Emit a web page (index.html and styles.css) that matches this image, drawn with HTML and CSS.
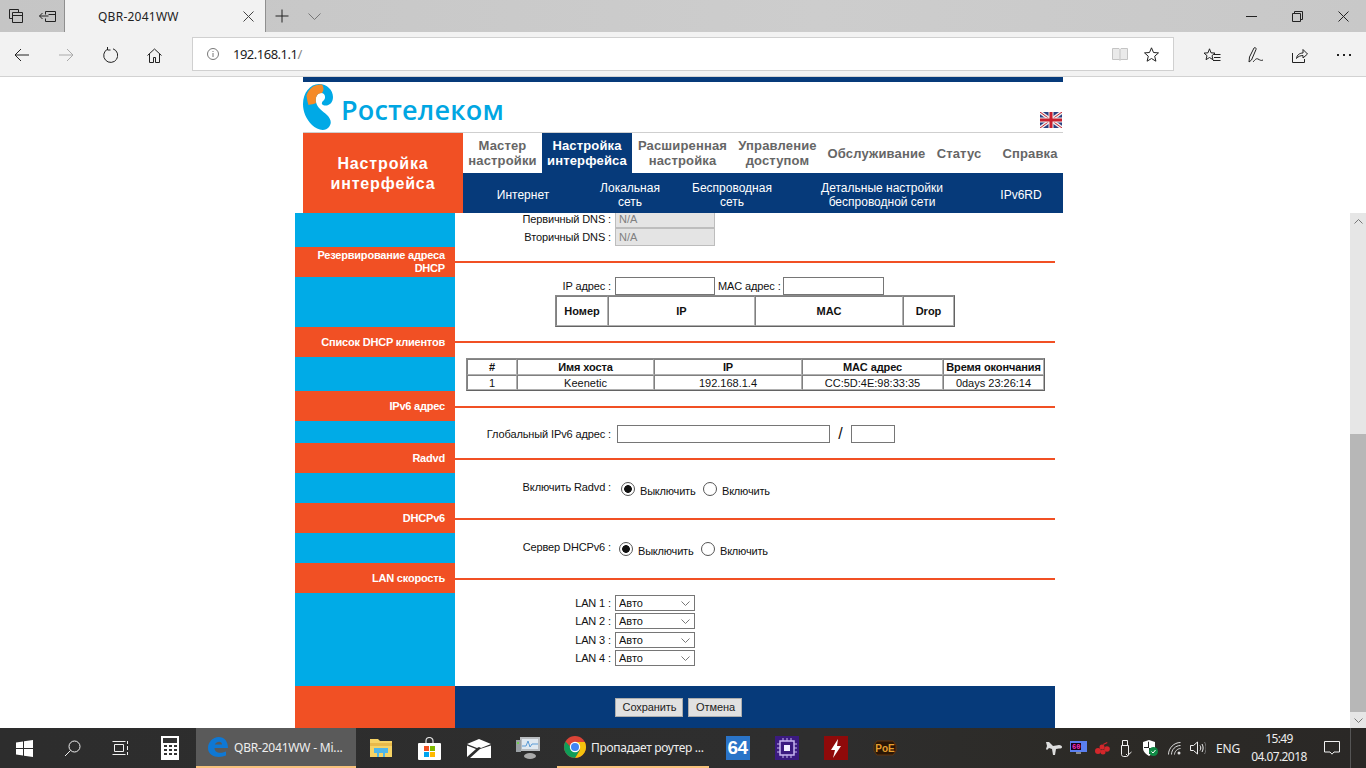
FILE: index.html
```html
<!DOCTYPE html>
<html lang="ru">
<head>
<meta charset="utf-8">
<title>QBR-2041WW</title>
<link rel="stylesheet" href="styles.css">
</head>
<body>
<div class="browser">
  <div class="tabbar">
    <div class="tb-btn"><svg width="16" height="16" viewBox="0 0 16 16" class="ic"><path d="M1.5 1.5h9v3M1.5 1.5v9h3M4.5 4.5h10v10h-10zM4.5 7.5h10"/></svg></div>
    <div class="tb-btn"><svg width="18" height="14" viewBox="0 0 18 14" class="ic"><path d="M6.5 2.5h10v10h-10v-3M6.5 5.5v-3M9.5 5.5h7M0.5 7h9M3.5 4L0.5 7l3 3"/></svg></div>
    <div class="tab">
      <span class="tab-title">QBR-2041WW</span>
      <svg width="11" height="11" viewBox="0 0 11 11" class="ic tab-x"><path d="M.5.5l10 10M10.5.5l-10 10"/></svg>
    </div>
    <div class="tb-btn"><svg width="14" height="14" viewBox="0 0 14 14" class="ic"><path d="M7 .5v13M.5 7h13"/></svg></div>
    <div class="tb-btn"><svg width="13" height="7" viewBox="0 0 13 7" class="ic grey"><path d="M.5.5l6 6 6-6"/></svg></div>
    <div class="win-ctrls">
      <div class="win-btn"><svg width="11" height="1" viewBox="0 0 11 1" class="ic"><path d="M0 .5h11"/></svg></div>
      <div class="win-btn"><svg width="11" height="11" viewBox="0 0 11 11" class="ic"><path d="M.5 2.5h8v8h-8zM2.5 2.5v-2h8v8h-2"/></svg></div>
      <div class="win-btn"><svg width="11" height="11" viewBox="0 0 11 11" class="ic"><path d="M.5.5l10 10M10.5.5l-10 10"/></svg></div>
    </div>
  </div>
  <div class="toolbar">
    <div class="nav-btn"><svg width="16" height="14" viewBox="0 0 16 14" class="ic"><path d="M15 7H1M7 1L1 7l6 6"/></svg></div>
    <div class="nav-btn"><svg width="16" height="14" viewBox="0 0 16 14" class="ic faint"><path d="M1 7h14M9 1l6 6-6 6"/></svg></div>
    <div class="nav-btn"><svg width="16" height="16" viewBox="0 0 16 16" class="ic"><path d="M5.5 2.2A7 7 0 1 0 11 1.8M5.5 0v3h3"/></svg></div>
    <div class="nav-btn"><svg width="15" height="15" viewBox="0 0 15 15" class="ic"><path d="M.5 7.5l7-6.5 7 6.5M2.5 6v8.500h4v-5h2v5h4V6"/></svg></div>
    <div class="address">
      <svg width="12" height="12" viewBox="0 0 12 12" class="ic grey info"><circle cx="6" cy="6" r="5.500"/><path d="M6 5v4M6 3v1"/></svg>
      <span class="url">192.168.1.1<span class="url-dim">/</span></span>
      <svg width="16" height="14" viewBox="0 0 16 14" class="ic pale book"><path d="M.5 1.500h6.500l1 1 1-1h6.500v11h-6.500l-1 .8-1-.8H.5zM8 2.500v10.500" fill="#eaeaea"/></svg>
      <svg width="15" height="15" viewBox="0 0 15 15" class="ic star"><path d="M7.500.8l2 4.700 5 .4-3.800 3.300 1.200 5-4.400-2.700-4.400 2.700 1.200-5L.5 5.900l5-.4z"/></svg>
    </div>
    <div class="nav-btn first-right"><svg width="17" height="15" viewBox="0 0 17 15" class="ic"><path d="M5.500.8l1.500 4 4 .3-3 2.600 1 4-3.500-2.200L2 11.700l1-4-3-2.600 4-.3zM10 6.500h6.500M10 9.500h6.500M9 12.500h7.500"/></svg></div>
    <div class="nav-btn"><svg width="16" height="16" viewBox="0 0 16 16" class="ic"><path d="M1 15l.5-5L6 1c1-1 2.500 0 2 1.500L3.500 13 1 15zM5 15c2-2 3-4 5-3s3 2 5 1"/></svg></div>
    <div class="nav-btn"><svg width="16" height="15" viewBox="0 0 16 15" class="ic"><path d="M.5 5v9.500h12V11M4.500 10.500C5 6.500 8 5 11 5V1.500L15.500 6 11 10V7.500c-2.500 0-5 1-6.500 3z"/></svg></div>
    <div class="nav-btn"><span class="dots"><i></i><i></i><i></i></span></div>
  </div>

  <div class="viewport">
    <header class="top-frame">
      <div class="top-page">
        <div class="top-bar"></div>
        <div class="brand">
          <svg class="logo" width="30" height="46" viewBox="0 0 30 46">
            <path fill="#00a9e6" d="M16 0C24 0 30 6 30 13C30 20 24 23 20 21C18 20 19 18 20 17C23 15 23 9 18 9C14 9 12 14 13 18C14 24 20 27 24 31C28 35 29 39 26 43C22 48 14 46 9 41C3 35 0 28 0 20C0 9 7 0 16 0Z"/>
            <path fill="#f58a28" d="M19 .6C12 0 6 4 3.500 11.500C4 15 4.500 18 5.500 21C8 20.500 11 20 13 19C12 13 14 9 19 9C21 7 21 3 19 .6Z"/>
          </svg>
          <span class="brand-name">Ростелеком</span>
          <svg class="flag" width="22" height="16" viewBox="0 0 22 16">
            <rect width="22" height="16" fill="#2a3f80"/>
            <path d="M0 0l22 16M22 0L0 16" stroke="#eee" stroke-width="3.500"/>
            <path d="M0 0l22 16M22 0L0 16" stroke="#c8202f" stroke-width="1"/>
            <path d="M11 0v16M0 8h22" stroke="#eee" stroke-width="5"/>
            <path d="M11 0v16M0 8h22" stroke="#c8202f" stroke-width="3"/>
          </svg>
        </div>
        <div class="menu-wrap">
          <div class="section-title">Настройка<br>интерфейса</div>
          <div class="menus">
            <nav class="menu-main">
              <a class="m1">Мастер<br>настройки</a>
              <a class="m2 active">Настройка<br>интерфейса</a>
              <a class="m3">Расширенная<br>настройка</a>
              <a class="m4">Управление<br>доступом</a>
              <a class="m5">Обслуживание</a>
              <a class="m6">Статус</a>
              <a class="m7">Справка</a>
            </nav>
            <nav class="menu-sub">
              <a class="s1">Интернет</a>
              <a class="s2">Локальная<br>сеть</a>
              <a class="s3">Беспроводная<br>сеть</a>
              <a class="s4">Детальные настройки<br>беспроводной сети</a>
              <a class="s5">IPv6RD</a>
            </nav>
          </div>
        </div>
      </div>
    </header>

    <div class="content-frame">
      <div class="scroll-area">
        <main class="page">
          <section class="row h34 dns">
            <div class="side"></div>
            <div class="body">
              <div class="field dns-field"><span class="lbl">Первичный DNS :</span><input class="ro" value="N/A" disabled></div>
              <div class="field dns-field"><span class="lbl">Вторичный DNS :</span><input class="ro" value="N/A" disabled></div>
            </div>
          </section>
          <section class="row title"><div class="side"><span class="two-line">Резервирование адреса DHCP</span></div><div class="body"><hr class="rule r14"></div></section>
          <section class="row h50">
            <div class="side"></div>
            <div class="body">
              <div class="field ip-field">
                <span class="lbl">IP адрес :</span><input class="txt w100">
                <span class="lbl-mac">MAC адрес :</span><input class="txt w101">
              </div>
              <table class="grid t-res">
                <tr><th>Номер</th><th>IP</th><th>MAC</th><th>Drop</th></tr>
              </table>
            </div>
          </section>
          <section class="row title"><div class="side"><span>Список DHCP клиентов</span></div><div class="body"><hr class="rule r14"></div></section>
          <section class="row h34">
            <div class="side"></div>
            <div class="body">
              <table class="grid t-cli">
                <tr class="hd"><th>#</th><th>Имя хоста</th><th>IP</th><th>MAC адрес</th><th>Время окончания</th></tr>
                <tr><td>1</td><td>Keenetic</td><td>192.168.1.4</td><td>CC:5D:4E:98:33:35</td><td>0days 23:26:14</td></tr>
              </table>
            </div>
          </section>
          <section class="row title"><div class="side"><span>IPv6 адрес</span></div><div class="body"><hr class="rule r15"></div></section>
          <section class="row h22">
            <div class="side"></div>
            <div class="body">
              <div class="field v6-field"><span class="lbl">Глобальный IPv6 адрес :</span><input class="txt w213"><span class="slash">/</span><input class="txt w44"></div>
            </div>
          </section>
          <section class="row title"><div class="side"><span>Radvd</span></div><div class="body"><hr class="rule r15"></div></section>
          <section class="row h30">
            <div class="side"></div>
            <div class="body">
              <div class="field opt-field radvd">
                <span class="lbl">Включить Radvd :</span>
                <input class="radio" type="radio" name="radvd" checked><span class="choice c1">Выключить</span>
                <input class="radio" type="radio" name="radvd"><span class="choice">Включить</span>
              </div>
            </div>
          </section>
          <section class="row title"><div class="side"><span>DHCPv6</span></div><div class="body"><hr class="rule r15"></div></section>
          <section class="row h30">
            <div class="side"></div>
            <div class="body">
              <div class="field opt-field dhcp6">
                <span class="lbl">Сервер DHCPv6 :</span>
                <input class="radio" type="radio" name="d6" checked><span class="choice c1">Выключить</span>
                <input class="radio" type="radio" name="d6"><span class="choice">Включить</span>
              </div>
            </div>
          </section>
          <section class="row title"><div class="side"><span>LAN скорость</span></div><div class="body"><hr class="rule r15"></div></section>
          <section class="row h93">
            <div class="side"></div>
            <div class="body lan">
              <div class="field lan-field"><span class="lbl">LAN 1 :</span><select class="sel"><option>Авто</option></select></div>
              <div class="field lan-field"><span class="lbl">LAN 2 :</span><select class="sel"><option>Авто</option></select></div>
              <div class="field lan-field"><span class="lbl">LAN 3 :</span><select class="sel"><option>Авто</option></select></div>
              <div class="field lan-field"><span class="lbl">LAN 4 :</span><select class="sel"><option>Авто</option></select></div>
            </div>
          </section>
          <section class="row foot">
            <div class="foot-side"></div>
            <div class="foot-body"><button class="btn b-save">Сохранить</button><button class="btn b-cancel">Отмена</button></div>
          </section>
        </main>
      </div>
      <div class="scrollbar">
        <div class="sb-arrow"><svg width="9" height="5" viewBox="0 0 9 5" class="ic grey"><path d="M.5 4.500l4-4 4 4"/></svg></div>
        <div class="sb-track"></div>
        <div class="sb-thumb"></div>
        <div class="sb-arrow"><svg width="9" height="5" viewBox="0 0 9 5" class="ic grey"><path d="M.5.500l4 4 4-4"/></svg></div>
      </div>
    </div>
  </div>

  <footer class="taskbar">
    <div class="tk"><svg width="17" height="17" viewBox="0 0 17 17"><path fill="#fff" d="M0 2.400l7-1v6.600H0zM8 1.300L17 0v8H8zM0 9h7v6.600l-7-1zM8 9h9v8l-9-1.300z"/></svg></div>
    <div class="tk"><svg width="17" height="17" viewBox="0 0 17 17" class="ic white"><circle cx="10.500" cy="6.500" r="5.500"/><path d="M6.500 10.500L1 16"/></svg></div>
    <div class="tk"><svg width="17" height="16" viewBox="0 0 17 16" class="ic white"><path d="M2.500 4.500h9v7h-9zM.5 1.500h13M.5 14.500h13M15.500 1v3M15.500 6v4M15.500 12v3"/></svg></div>
    <div class="tk tk-calc"><svg width="18" height="24" viewBox="0 0 18 24"><rect width="18" height="24" fill="#fff"/><rect x="2" y="2" width="14" height="5" fill="#333"/><g fill="#333"><rect x="3" y="9" width="3" height="2"/><rect x="8" y="9" width="3" height="2"/><rect x="13" y="9" width="3" height="2"/><rect x="3" y="13" width="3" height="2"/><rect x="8" y="13" width="3" height="2"/><rect x="13" y="13" width="3" height="2"/><rect x="3" y="17" width="3" height="2"/><rect x="8" y="17" width="3" height="2"/><rect x="13" y="17" width="3" height="2"/></g></svg></div>
    <div class="tk-app current">
      <svg width="20" height="20" viewBox="0 0 20 20"><path fill="#0f78d4" d="M10.500 0C16.500 0 20 4.500 20 11H6.500C6.500 15 11 17.500 18 14.500V18.500C11 21.500 0 20 0 11C0 5 5 0 10.500 0ZM6.800 7.500H14C14 4 9 3.500 6.800 7.500Z"/></svg>
      <span>QBR-2041WW - Mi...</span>
    </div>
    <div class="tk"><svg width="22" height="20" viewBox="0 0 22 20"><path fill="#f6d365" d="M0 1h8l2 2h12v16H0z"/><path fill="#e8b94a" d="M0 5h22v3H0z"/><path fill="#4fb6e8" d="M4 10h14v5h-3v4H7v-4H4z"/><rect x="9" y="15" width="4" height="4" fill="#f6d365"/></svg></div>
    <div class="tk"><svg width="23" height="23" viewBox="0 0 23 23"><path fill="none" stroke="#ddd" stroke-width="1.200" d="M8 7V4a3.500 3.500 0 0 1 7 0v3"/><rect y="6" width="23" height="17" rx="1" fill="#fff"/><rect x="6" y="9" width="5" height="5" fill="#f25022"/><rect x="12" y="9" width="5" height="5" fill="#7fba00"/><rect x="6" y="15" width="5" height="5" fill="#00a4ef"/><rect x="12" y="15" width="5" height="5" fill="#ffb900"/></svg></div>
    <div class="tk"><svg width="24" height="19" viewBox="0 0 24 19"><path fill="#fff" d="M0 5L12 0l12 5L14 9 12 8l-2 1zM0 6.500l9 3.500-9 8zM24 6.500V19H3l10-9z"/></svg></div>
    <div class="tk"><svg width="24" height="22" viewBox="0 0 24 22"><rect x="4" y="0" width="20" height="14" fill="#b8bcc0"/><rect x="6" y="2" width="16" height="10" fill="#dfe8f0"/><path fill="none" stroke="#5b9bd5" d="M6 9h4l2-5 2 6 2-3h6"/><rect x="0" y="3" width="5" height="12" fill="#9aa0a4"/><rect x="1" y="5" width="2" height="2" fill="#6fcf4f"/><ellipse cx="14" cy="19" rx="6" ry="3" fill="#aaa"/></svg></div>
    <div class="tk-app chrome">
      <svg width="22" height="22" viewBox="0 0 22 22"><circle cx="11" cy="11" r="11" fill="#db4437"/><path fill="#f4c20d" d="M11 6h9.800A11 11 0 0 1 11 22l5-8z"/><path fill="#0f9d58" d="M1.500 5.500A11 11 0 0 0 11 22l5-8.500-5 2z"/><circle cx="11" cy="11" r="5.200" fill="#fff"/><circle cx="11" cy="11" r="4" fill="#4285f4"/></svg>
      <span>Пропадает роутер ...</span>
    </div>
    <div class="tk"><div class="tile t64">64</div></div>
    <div class="tk"><svg width="24" height="24" viewBox="0 0 24 24"><rect width="24" height="24" fill="#3b1a80"/><rect x="5" y="5" width="14" height="14" fill="none" stroke="#c8b6f0" stroke-width="1.500"/><rect x="9" y="9" width="6" height="6" fill="#f2efff"/><path stroke="#c8b6f0" d="M8 2v3M12 2v3M16 2v3M8 19v3M12 19v3M16 19v3M2 8h3M2 12h3M2 16h3M19 8h3M19 12h3M19 16h3"/></svg></div>
    <div class="tk"><svg width="24" height="24" viewBox="0 0 24 24"><rect width="24" height="24" fill="#8f0a0a"/><path fill="#fff" d="M14 3L7 14h4l-2 8 8-12h-4z"/></svg></div>
    <div class="tk"><svg width="24" height="16" viewBox="0 0 24 16"><path d="M4 1h16l3 4v6l-3 4H4l-3-4V5z" fill="#2a1606" stroke="#5e3510"/><text x="12" y="12" class="poe">PoE</text></svg></div>
    <div class="tray">
      <div class="tr"><svg width="16" height="14" viewBox="0 0 16 14"><path fill="#ddd" d="M0 1l3 0 4 4 6-1c2 0 3 1 3 2s-1 1.500-3 1.500L10 8l-1 6H7L6 8 3 7 1 9 0 8l1-3z"/></svg></div>
      <div class="tr"><svg width="17" height="14" viewBox="0 0 17 14"><rect width="17" height="11" fill="#5a7ff0"/><rect x="1" y="2" width="10" height="7" fill="#180018"/><text x="2" y="8" class="fps">60</text><rect x="6" y="11" width="5" height="2" fill="#888"/></svg></div>
      <div class="tr"><svg width="15" height="13" viewBox="0 0 15 13" fill="#d3272b"><circle cx="3" cy="9" r="3"/><circle cx="8" cy="10" r="2.500"/><circle cx="12" cy="7" r="2.800"/><circle cx="7" cy="5" r="2.500"/><path d="M8 2l4-2 .5 1-4 2z"/></svg></div>
      <div class="tr"><svg width="12" height="17" viewBox="0 0 12 17" class="ic white"><path d="M1.500 5.500h7v9c0 1-1 2-2 2h-3c-1 0-2-1-2-2zM2.500 5.500v-5h5v5M6 14l1.500 1.500L11.500 12"/></svg></div>
      <div class="tr"><svg width="16" height="16" viewBox="0 0 16 16"><path fill="#fff" d="M7 0L1 2v6c0 4 3 6 6 8 3-2 6-4 6-8V2z"/><path fill="#222" d="M7 1.500V8H2V7h4V2zM7 8h5v1H8v5H7z"/><circle cx="11.500" cy="11.500" r="4.500" fill="#0f8a45"/><path d="M9.500 11.500l1.500 1.500 2.500-3" stroke="#fff" fill="none"/></svg></div>
      <div class="tr"><svg width="13" height="13" viewBox="0 0 13 13" class="ic lightgrey"><path d="M.5 12.500C.5 6 6 .5 12.500.5M3.500 12.500c0-5 4-9 9-9M6.500 12.500c0-3 3-6 6-6"/><circle cx="11" cy="11" r="1.500" fill="#ddd" stroke="none"/></svg></div>
      <div class="tr"><svg width="16" height="14" viewBox="0 0 16 14" class="ic white"><path d="M.5 4.500h3L7.500 1v12l-4-3.500h-3zM10 4.500c1 1.500 1 3.500 0 5M12 3c1.500 2.500 1.500 5.500 0 8"/><path d="M14.500 1c2 3.500 2 8.500 0 12" stroke="#777"/></svg></div>
      <div class="tr-lang">ENG</div>
      <div class="clock"><span>15:49</span><span>04.07.2018</span></div>
      <div class="notif"><svg width="16" height="14" viewBox="0 0 16 14" class="ic white"><path d="M.5.500h15v10.500h-5.500L8 13.200 6 11H.5z"/></svg></div>
      <div class="show-desk"></div>
    </div>
  </footer>
</div>
</body>
</html>
```
FILE: styles.css
```css
* { box-sizing: border-box; }
html, body { margin: 0; padding: 0; height: 100%; overflow: hidden; }
body { font-family: "Liberation Sans", Arial, sans-serif; font-size: 11px; color: #111; background: #fff; }
.browser { width: 1366px; height: 768px; display: flex; flex-direction: column; overflow: hidden; }

.ic { fill: none; stroke: #222; stroke-width: 1; display: block; flex: none; }
.ic.grey { stroke: #777; }
.ic.faint { stroke: #aaa; }
.ic.pale { stroke: #c4c4c4; }
.ic.white { stroke: #f0f0f0; }
.ic.lightgrey { stroke: #ddd; }

/* browser chrome */
.tabbar { height: 32px; display: flex; background: linear-gradient(90deg, #c5c5c5, #cdcdcd 60%, #c8c8c8); flex: none; }
.tb-btn { width: 32px; display: flex; align-items: center; justify-content: center; }
.tab { width: 202px; margin-left: 0; display: flex; align-items: center; background: #f2f2f2; border-left: 1px solid #8f8f8f; border-right: 1px solid #8f8f8f; font-family: "Noto Sans", sans-serif; font-size: 12px; letter-spacing: .25px; color: #222; }
.tab-title { padding-left: 33px; flex: 1; }
.tab-x { margin-right: 11px; stroke: #444; }
.win-ctrls { margin-left: auto; display: flex; }
.win-btn { width: 46px; display: flex; align-items: center; justify-content: center; }

.toolbar { height: 45px; flex: none; display: flex; align-items: center; background: #f2f2f2; border-bottom: 1px solid #d2d2d2; }
.nav-btn { width: 44px; height: 44px; padding-top: 2px; display: flex; align-items: center; justify-content: center; flex: none; }
.nav-btn.first-right { margin-left: 16px; }
.address { width: 982px; height: 34px; margin-left: 16px; background: #fff; border: 1px solid #d0d0d0; display: flex; align-items: center; flex: none; font-family: "Noto Sans", sans-serif; font-size: 13px; color: #222; }
.info { margin-left: 14px; }
.url { margin-left: 14px; flex: 1; letter-spacing: -.5px; }
.url-dim { color: #888; }
.book { margin-right: 16px; }
.star { margin-right: 14px; }
.dots { display: flex; gap: 4px; }
.dots i { width: 2px; height: 2px; background: #222; display: block; }

/* viewport */
.viewport { flex: 1; min-height: 0; display: flex; flex-direction: column; background: #fff; }
.top-frame { height: 136px; flex: none; }
.top-page { width: 760px; margin: 0 auto; }
.top-bar { height: 5px; background: #063a7a; }
.brand { height: 51px; border-bottom: 1px solid #cfcfcf; display: flex; align-items: flex-start; }
.logo { margin-top: 2px; flex: none; }
.brand-name { margin-left: 8px; margin-top: 10px; font-family: "Open Sans", sans-serif; font-weight: 600; font-size: 27px; line-height: 36px; letter-spacing: .2px; color: #00a6e2; flex: 1; }
.flag { margin: 30px 1px 0 0; flex: none; }
.menu-wrap { display: flex; height: 80px; }
.section-title { width: 160px; flex: none; padding-top: 2px; background: #f15024; color: #fff; font-weight: 700; font-size: 16px; line-height: 20px; letter-spacing: .85px; text-align: center; display: flex; align-items: center; justify-content: center; }
.menus { width: 600px; }
.menu-main { height: 40px; display: grid; grid-template-columns: 79px 90px 101px 89px 109px 56px 76px; }
.menu-main a { display: flex; align-items: center; justify-content: center; text-align: center; font-weight: 700; font-size: 13px; line-height: 15px; letter-spacing: .15px; color: #666; white-space: nowrap; }
.menu-main .active { background: #063a7a; color: #fff; }
.menu-main .m7 { padding-left: 10px; }
.menu-sub { height: 40px; padding-top: 3px; background: #063a7a; display: grid; grid-template-columns: 120px 94px 110px 190px 86px; }
.menu-sub a { display: flex; align-items: center; justify-content: center; text-align: center; font-size: 12px; line-height: 14px; color: #fff; }
.menu-sub .s5 { padding-left: 2px; }

.content-frame { flex: 1; min-height: 0; display: flex; }
.scroll-area { flex: 1; min-width: 0; overflow: hidden; }
.scrollbar { width: 16px; flex: none; display: flex; flex-direction: column; background: #e6e6e6; }
.sb-arrow { height: 16px; flex: none; display: flex; align-items: center; justify-content: center; }
.sb-track { height: 205px; flex: none; }
.sb-thumb { flex: 1; background: #b7b7b7; }

.page { width: 760px; margin: 0 auto; }
.row { display: flex; }
.side { width: 160px; flex: none; background: #00abe7; }
.body { flex: 1; min-width: 0; overflow: hidden; }
.h34 { height: 34px; }
.h50 { height: 50px; }
.h22 { height: 22px; }
.h30 { height: 30px; }
.h93 { height: 93px; }
.title { height: 30px; }
.title .side { background: #f15024; color: #fff; font-weight: 700; font-size: 11px; line-height: 13px; letter-spacing: -.2px; text-align: right; padding-right: 10px; display: flex; align-items: center; justify-content: flex-end; }
.rule { height: 2px; margin: 0; border: 0; background: #f15024; }
.r14 { margin-top: 14px; }
.r15 { margin-top: 15px; }

.field { display: flex; align-items: center; }
.lbl { width: 156px; flex: none; text-align: right; white-space: pre; letter-spacing: -.12px; }
input.ro { width: 100px; height: 18px; margin: 0 0 0 4px; padding: 0 3px; border: 1px solid #bdbdbd; background: #e4e4e4; color: #808080; font: 11px "Liberation Sans", sans-serif; }
.dns .body { margin-top: -3px; }
.dns-field { height: 18px; }
.txt { height: 18px; margin: 0; padding: 0 2px; border: 1px solid #767676; background: #fff; }
.w100 { width: 100px; margin-left: 4px; }
.w101 { width: 101px; margin-left: 2px; }
.w213 { width: 213px; margin-left: 6px; }
.w44 { width: 44px; }
.lbl-mac { margin-left: 3px; letter-spacing: -.12px; }
.ip-field { height: 18px; }
.v6-field { padding-top: 4px; height: 22px; }
.slash { width: 21px; text-align: center; font-size: 16px; line-height: 18px; }

table.grid { border-collapse: separate; border-spacing: 0; table-layout: fixed; border: 1px solid; border-color: #8a8a8a #636363 #636363 #8a8a8a; }
.grid th, .grid td { padding: 0; text-align: center; border: 1px solid; border-color: #808080 #b0b0b0 #b0b0b0 #808080; font-size: 11px; line-height: 13px; color: #111; }
.grid th { font-weight: 700; }
.t-res { margin-left: 100px; width: 400px; height: 32px; }
.t-res th:nth-child(1) { width: 52px; }
.t-res th:nth-child(2) { width: 147px; }
.t-res th:nth-child(3) { width: 148px; }
.t-cli { margin: 1px 0 0 11px; width: 579px; height: 33px; }
.t-cli th:nth-child(1) { width: 50px; }
.t-cli th:nth-child(2) { width: 137px; }
.t-cli th:nth-child(3) { width: 148px; }
.t-cli th:nth-child(4) { width: 141px; }
.t-cli th, .t-cli td { line-height: 12px; }
.t-cli th { white-space: nowrap; letter-spacing: -.1px; }
.t-cli .hd { height: 16px; }

.opt-field { align-items: flex-start; height: 30px; }
.opt-field .lbl { padding-top: 8px; }
.radvd { padding-top: 0; }
.radio { appearance: none; -webkit-appearance: none; width: 14px; height: 14px; margin: 9px 0 0 0; border: 1px solid #555; border-radius: 50%; background: #fff; flex: none; }
.radio:checked { background: radial-gradient(circle, #111 0 3.500px, #fff 4.200px); }
.radvd .radio:first-of-type { margin-left: 10px; }
.dhcp6 .radio:first-of-type { margin-left: 8px; }
.choice { padding-top: 12px; margin-left: 5px; letter-spacing: -.2px; }
.choice.c1 { width: 63px; }

.lan { padding-top: 2px; }
.lan-field { height: 18.330px; align-items: flex-start; }
.sel { appearance: none; -webkit-appearance: none; width: 80px; height: 16px; margin: 0 0 0 4px; padding: 0 0 0 3px; border: 1px solid #767676; border-radius: 0; background: #fff url("data:image/svg+xml,%3Csvg xmlns='http://www.w3.org/2000/svg' width='9' height='5'%3E%3Cpath d='M.5.5l4 4 4-4' fill='none' stroke='%23777'/%3E%3C/svg%3E") no-repeat 65px 5px; font: 11px/14px "Liberation Sans", sans-serif; color: #111; }
.lan-field .lbl { line-height: 16px; }

.foot { height: 42px; }
.foot-side { width: 160px; flex: none; background: #f15024; }
.foot-body { flex: 1; background: #063a7a; padding: 12px 0 0 160px; display: flex; align-items: flex-start; }
.btn { height: 19px; padding: 0 0 1px 1px; border: 1px solid #adadad; background: #e1e1e1; font: 11px "Liberation Sans", sans-serif; letter-spacing: -.1px; color: #222; }
.b-save { width: 68px; }
.b-cancel { width: 54px; margin-left: 5px; }

/* taskbar */
.taskbar { height: 40px; flex: none; display: flex; align-items: stretch; background: linear-gradient(90deg, #2d2d2d, #2e2e2e 60%, #2c2a26 80%, #2a2826); color: #eee; font-family: "Noto Sans", sans-serif; font-size: 12px; }
.tk { width: 49px; flex: none; display: flex; align-items: center; justify-content: center; }
.tk:nth-child(-n+3) { width: 48px; }
.tk-calc { width: 52px; }
.tk-app { display: flex; align-items: center; flex: none; white-space: nowrap; border-bottom: 2px solid transparent; }
.tk-app.current { width: 160px; background: #5a5a5a; padding-left: 12px; border-bottom-color: #f8c27c; gap: 6px; letter-spacing: -.2px; }
.tk-app.chrome { width: 152px; margin-left: 5px; margin-right: 4px; padding-left: 7px; border-bottom-color: #f8c27c; gap: 5px; letter-spacing: -.3px; }
.tile { width: 24px; height: 24px; display: flex; align-items: center; justify-content: center; }
.t64 { background: #2a74c8; color: #fff; font: 700 19px "Liberation Sans", sans-serif; letter-spacing: -.5px; }
.poe { fill: #e6a030; font: 700 10px "Liberation Sans", sans-serif; text-anchor: middle; }
.fps { fill: #ff30c0; font: 700 7px "Liberation Mono", monospace; }
.tray { margin-left: auto; display: flex; align-items: stretch; width: 324px; flex: none; }
.tr { width: 24px; flex: none; display: flex; align-items: center; justify-content: center; }
.tr-lang { width: 34px; flex: none; padding-left: 2px; display: flex; align-items: center; justify-content: center; font-size: 12px; letter-spacing: -.1px; color: #eee; }
.clock { width: 70px; flex: none; display: flex; flex-direction: column; align-items: center; justify-content: center; line-height: 18px; font-size: 12px; letter-spacing: -.6px; color: #eee; }
.notif { width: 36px; flex: none; display: flex; align-items: center; justify-content: center; }
.show-desk { flex: 1; border-left: 1px solid #555; margin: 0; }
```
